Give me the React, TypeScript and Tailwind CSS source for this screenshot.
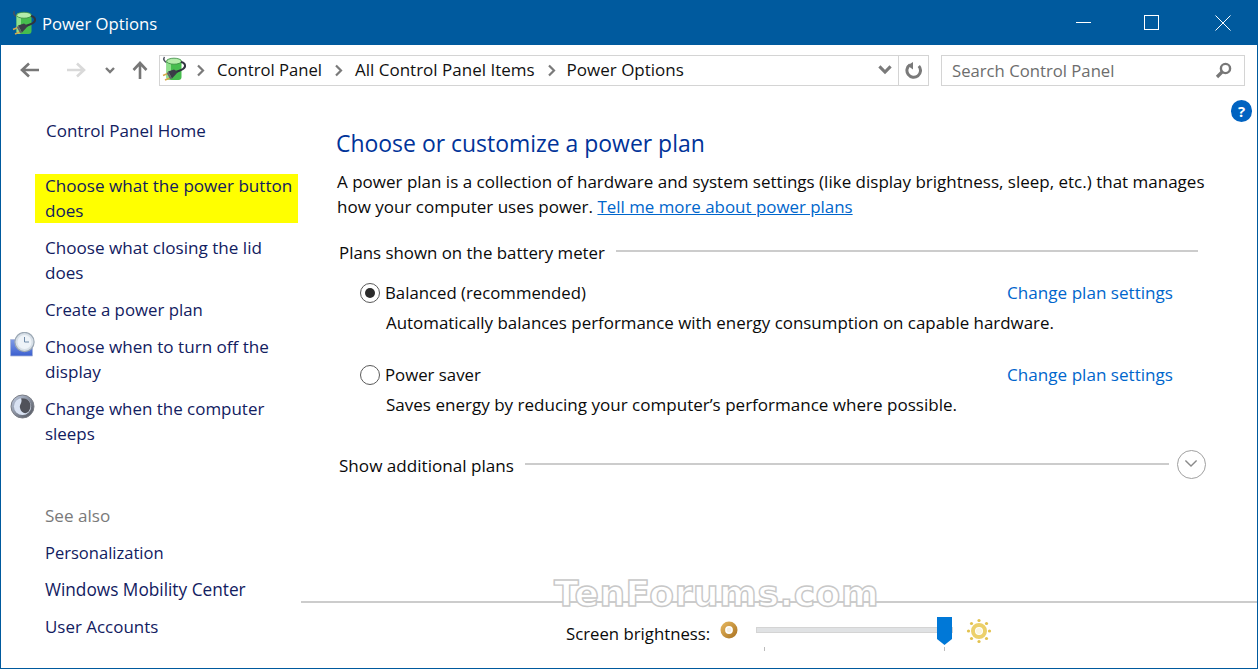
import React from "react";

const PlugIcon = ({ size = 26 }: { size?: number }) => (
  <svg width={size} height={size} viewBox="0 0 26 26">
    <path d="M7 7 C3 6 2 3 3.5 1" fill="none" stroke="#4a4f5c" strokeWidth="1.4" />
    <rect x="5.5" y="3" width="15" height="21" rx="3" fill="#46bd4e" />
    <rect x="5.5" y="3" width="4.5" height="21" rx="2.5" fill="#8fe08c" />
    <ellipse cx="13" cy="5.2" rx="7.4" ry="3" fill="#b4ecaa" stroke="#37893f" strokeWidth="0.8" />
    <path d="M20 6 C25 7 25 11 22 13 C20 14.5 17 15 15 16" fill="none" stroke="#30343f" strokeWidth="2" />
    <path d="M2 19.5 L8 17 M4 24 L10 21.5" stroke="#d6a84e" strokeWidth="1.6" />
    <path d="M7 15.5 L13 13.5 L17 16 L11 22.5 Z" fill="#3a3d47" />
    <path d="M7 15.5 L11 22.5 L9 23 L6 17.5 Z" fill="#5c606a" />
  </svg>
);

const Arrow = ({ dir, color }: { dir: "left" | "right" | "up"; color: string }) => {
  const d =
    dir === "left"
      ? "M2 8 H19 M9 1.5 L2 8 L9 14.5"
      : dir === "right"
        ? "M1 8 H18 M11 1.5 L18 8 L11 14.5"
        : "M9 18 V2 M2.5 9 L9 2 L15.5 9";
  return (
    <svg width={dir === "up" ? 18 : 20} height={dir === "up" ? 19 : 16} viewBox={dir === "up" ? "0 0 18 19" : "0 0 20 16"}>
      <path d={d} fill="none" stroke={color} strokeWidth="2.6" />
    </svg>
  );
};

const Chev = ({ w = 10, sw = 2.4, color = "#7a7a7a" }: { w?: number; sw?: number; color?: string }) => (
  <svg width={w} height={w * 0.7} viewBox="0 0 10 7">
    <path d="M1 1 L5 5 L9 1" fill="none" stroke={color} strokeWidth={sw} />
  </svg>
);

const Crumb = () => (
  <svg width="9" height="13" viewBox="0 0 9 13" className="shrink-0">
    <path d="M2 1.5 L7 6.5 L2 11.5" fill="none" stroke="#7a7a7a" strokeWidth="2.2" />
  </svg>
);

const ClockIcon = () => (
  <svg width="25" height="25" viewBox="0 0 25 25">
    <defs>
      <linearGradient id="cg" x1="0" y1="0" x2="0" y2="1">
        <stop offset="0" stopColor="#7f9be6" />
        <stop offset="1" stopColor="#3b5fcf" />
      </linearGradient>
    </defs>
    <path d="M0.5 7.5 H22.5 V24 H0.5 Z" fill="url(#cg)" stroke="#a9b6d8" strokeWidth="0.8" />
    <circle cx="14.5" cy="10" r="9.6" fill="#d8e0e8" stroke="#9ca8b4" strokeWidth="1.2" />
    <circle cx="14.5" cy="10" r="7" fill="#eef3f8" />
    <path d="M14.5 5 V10 H19" fill="none" stroke="#6f8aa8" strokeWidth="1" />
  </svg>
);

const MoonIcon = () => (
  <svg width="25" height="25" viewBox="0 0 25 25">
    <defs>
      <linearGradient id="mg" x1="0" y1="0" x2="1" y2="1">
        <stop offset="0" stopColor="#c4d0e6" />
        <stop offset="1" stopColor="#4a4d55" />
      </linearGradient>
    </defs>
    <circle cx="12.5" cy="12.5" r="11.5" fill="url(#mg)" stroke="#7b7e86" strokeWidth="1" />
    <circle cx="12.5" cy="12.5" r="8.6" fill="#d9e2f2" />
    <path d="M11 4.5 C19 3 23 11 19 17 C16 21 11 19 10 14 C9 11 13 8 11 4.5 Z" fill="#50525a" />
  </svg>
);

const SunDim = () => (
  <svg width="18" height="18" viewBox="0 0 18 18">
    <defs>
      <linearGradient id="sd" x1="0" y1="0" x2="1" y2="1">
        <stop offset="0" stopColor="#e0b058" />
        <stop offset="1" stopColor="#b07a28" />
      </linearGradient>
    </defs>
    <circle cx="9" cy="9" r="6.2" fill="none" stroke="url(#sd)" strokeWidth="4.6" />
    <circle cx="9" cy="9" r="2.4" fill="#f4f0e6" />
  </svg>
);

const SunBright = () => (
  <svg width="26" height="26" viewBox="0 0 26 26">
    <g fill="#e3c24e">
      <circle cx="13" cy="2.5" r="1.6" />
      <circle cx="13" cy="23.5" r="1.6" />
      <circle cx="2.5" cy="13" r="1.6" />
      <circle cx="23.5" cy="13" r="1.6" />
      <circle cx="5.5" cy="5.5" r="1.6" />
      <circle cx="20.5" cy="5.5" r="1.6" />
      <circle cx="5.5" cy="20.5" r="1.6" />
      <circle cx="20.5" cy="20.5" r="1.6" />
    </g>
    <circle cx="13" cy="13" r="6" fill="none" stroke="#ecd06a" strokeWidth="4" />
    <circle cx="13" cy="13" r="3" fill="#fbf6df" />
  </svg>
);

const Radio = ({ on }: { on?: boolean }) => (
  <span className="w-[20px] h-[20px] rounded-full border border-[#5a5a5a] flex items-center justify-center shrink-0 bg-white">
    {on && <span className="w-[10px] h-[10px] rounded-full bg-[#2b2b2b]" />}
  </span>
);

const SideLink = ({ children, icon, className = "" }: { children: React.ReactNode; icon?: React.ReactNode; className?: string }) => (
  <div className={"relative pl-[44px] pr-[28px] text-[#12205f] " + className}>
    {icon && <span className="absolute left-[9px] top-[-2px]">{icon}</span>}
    {children}
  </div>
);

const Plan = ({ name, desc, on, nameClass, descClass }: { name: string; desc: string; on?: boolean; nameClass: string; descClass: string }) => (
  <div className="flex flex-col">
    <div className="flex items-center h-[25px] pl-[23px] pr-[79px]">
      <Radio on={on} />
      <span className={"ml-[5px] text-[#0a0a0a] " + nameClass}>{name}</span>
      <a className="ml-auto text-[#0066cc]">Change plan settings</a>
    </div>
    <div className={"pl-[49px] h-[25px] mt-[5px] text-[#0a0a0a] " + descClass}>{desc}</div>
  </div>
);

export default function App() {
  return (
    <div
      className="w-[1258px] h-[669px] flex flex-col bg-white border-x border-b border-[#005a9e] overflow-hidden relative text-[17.1px] leading-[25px]"
      style={{ fontFamily: '"Open Sans", "Noto Sans", sans-serif' }}
    >
      <div className="h-[45px] bg-[#005a9e] flex items-center shrink-0 text-white">
        <span className="ml-[10px] mr-[5px]"><PlugIcon /></span>
        <span className="text-[16.7px] pt-[1px]">Power Options</span>
        <div className="ml-auto flex items-center">
          <span className="w-[15px] h-px bg-white mr-[53px]" />
          <span className="w-[15px] h-[15px] border border-white mr-[56px]" />
          <svg width="16" height="16" viewBox="0 0 16 16" className="mr-[26px]">
            <path d="M.5.5 L15.5 15.5 M15.5.5 L.5 15.5" stroke="#fff" strokeWidth="1" />
          </svg>
        </div>
      </div>

      <div className="h-[49px] flex items-center shrink-0 pt-[1px]">
        <span className="ml-[19px] flex"><Arrow dir="left" color="#777777" /></span>
        <span className="ml-[26px] flex"><Arrow dir="right" color="#d9d9d9" /></span>
        <span className="ml-[19px] flex"><Chev /></span>
        <span className="ml-[16px] flex"><Arrow dir="up" color="#777777" /></span>
        <div className="ml-[10px] w-[770px] h-[31px] border border-[#d4d4d4] flex items-center text-[#111111]">
          <span className="ml-[1px] -mt-[3px]"><PlugIcon size={26} /></span>
          <span className="ml-[9px]"><Crumb /></span>
          <span className="ml-[12px] -mt-[2px] text-[16.65px]">Control Panel</span>
          <span className="ml-[12px]"><Crumb /></span>
          <span className="ml-[12px] -mt-[2px] text-[17px]">All Control Panel Items</span>
          <span className="ml-[12px]"><Crumb /></span>
          <span className="ml-[11px] -mt-[2px] text-[17px]">Power Options</span>
          <span className="ml-auto mr-[6px] flex"><Chev w={14} sw={2.2} /></span>
          <span className="w-[30px] h-full border-l border-[#d4d4d4] flex items-center justify-center">
            <svg width="17" height="17" viewBox="0 0 17 17">
              <path d="M5 2.8 A6.8 6.8 0 1 0 13.8 4" fill="none" stroke="#7a7a7a" strokeWidth="3" />
              <path d="M8 0 V7.5 L2.5 3.5 Z" fill="#7a7a7a" />
            </svg>
          </span>
        </div>
        <div className="ml-[12px] w-[304px] h-[31px] border border-[#d4d4d4] flex items-center pl-[10px] pr-[12px] text-[#6d6d6d]">
          <span className="text-[16.7px]">Search Control Panel</span>
          <svg width="17" height="17" viewBox="0 0 17 17" className="ml-auto">
            <circle cx="10.5" cy="6.5" r="4.6" fill="none" stroke="#777" strokeWidth="2.4" />
            <path d="M7 10 L2 15" stroke="#777" strokeWidth="3.2" />
          </svg>
        </div>
      </div>

      <div className="flex flex-1 min-h-0 relative">
        <aside className="w-[300px] shrink-0 flex flex-col pt-[24px]">
          <SideLink className="text-[17px] ml-px">Control Panel Home</SideLink>
          <div className="mt-[31px] ml-[34px] w-[263px] h-[49px] bg-[#ffff00] pl-[10px] pr-[4px] text-[#12205f]">
            <div className="-mt-px">Choose what the power button does</div>
          </div>
          <div className="mt-[12px] flex flex-col gap-[12px]">
            <SideLink>Choose what closing the lid does</SideLink>
            <SideLink className="text-[16.8px]">Create a power plan</SideLink>
            <SideLink icon={<ClockIcon />}>Choose when to turn off the display</SideLink>
            <SideLink icon={<MoonIcon />} className="text-[16.95px]">Change when the computer sleeps</SideLink>
          </div>
          <div className="mt-[57px] pl-[44px] text-[#7a7a7a]">See also</div>
          <div className="mt-[12px] flex flex-col gap-[12px]">
            <SideLink className="text-[16.55px]">Personalization</SideLink>
            <SideLink className="text-[17.25px]">Windows Mobility Center</SideLink>
            <SideLink className="text-[16.95px]">User Accounts</SideLink>
          </div>
        </aside>

        <main className="flex-1 flex flex-col min-w-0">
          <div className="flex-1 pl-[36px] pr-[5px] flex flex-col">
            <div className="flex justify-end h-[0px]">
              <span className="mt-[6px] w-[21px] h-[22px] shrink-0 rounded-full bg-[#0063c1] text-white font-bold text-[15px] leading-[22px] text-center">?</span>
            </div>
            <h1 className="mt-[32px] -ml-px text-[22.95px] leading-[34px] text-[#003399]">Choose or customize a power plan</h1>
            <p className="mt-[9px] w-[880px] text-[#0a0a0a] text-[17px]">
              A power plan is a collection of hardware and system settings (like display brightness, sleep, etc.) that manages how your computer uses power.{" "}
              <a className="text-[#0066cc] underline text-[16.9px]">Tell me more about power plans</a>
            </p>
            <div className="mt-[21px] pl-[2px] flex items-center h-[25px] text-[#0a0a0a]">
              <span className="text-[16.85px]">Plans shown on the battery meter</span>
              <span className="ml-[11px] w-[582px] h-[2px] bg-[#cccccc] -mt-[3px]" />
            </div>
            <div className="mt-[15px] flex flex-col gap-[27px]">
              <Plan name="Balanced (recommended)" nameClass="text-[16.77px]" descClass="text-[16.92px]" desc="Automatically balances performance with energy consumption on capable hardware." on />
              <Plan name="Power saver" nameClass="text-[16.8px]" descClass="text-[17.04px]" desc="Saves energy by reducing your computer’s performance where possible." />
            </div>
            <div className="mt-[33px] pl-[2px] flex items-center h-[28px] text-[#0a0a0a]">
              <span className="pt-[2px]">Show additional plans</span>
              <span className="ml-[11px] w-[644px] h-[2px] bg-[#cccccc]" />
              <span className="ml-[8px] w-[29px] h-[29px] rounded-full border border-[#a0a0a0] flex items-center justify-center">
                <Chev w={14} sw={1} color="#8a8a8a" />
              </span>
            </div>
          </div>
          <div className="h-[67px] shrink-0 border-t-2 border-[#cccccc] flex items-start pl-[265px] text-[#0a0a0a] pt-[18px]">
            <span className="text-[16.75px]">Screen brightness:</span>
            <span className="ml-[10px] flex"><SunDim /></span>
            <div className="ml-[18px] relative w-[197px] h-[36px] -mt-[4px]">
              <div className="absolute left-0 right-0 top-[10px] h-[6px] bg-[#e0e2e4] border border-[#d4d4d4]" />
              <svg width="15" height="28" viewBox="0 0 15 28" className="absolute left-[181px] top-0">
                <path d="M0 0 H15 V22 L7.5 28 L0 22 Z" fill="#0078d7" />
              </svg>
              <span className="absolute left-[8px] top-[30px] w-px h-[4px] bg-[#bbbbbb]" />
              <span className="absolute left-[188px] top-[30px] w-px h-[4px] bg-[#bbbbbb]" />
            </div>
            <span className="ml-[13px] -mt-[3px] flex"><SunBright /></span>
          </div>
        </main>

        <span
          className="absolute left-[553px] top-[480px] text-[36px] leading-[40px] font-bold text-white tracking-[0.6px] [-webkit-text-stroke:1.4px_#c8c8c8]"
          style={{ fontFamily: '"DejaVu Sans", sans-serif' }}
        >
          TenForums.com
        </span>
      </div>
    </div>
  );
}
